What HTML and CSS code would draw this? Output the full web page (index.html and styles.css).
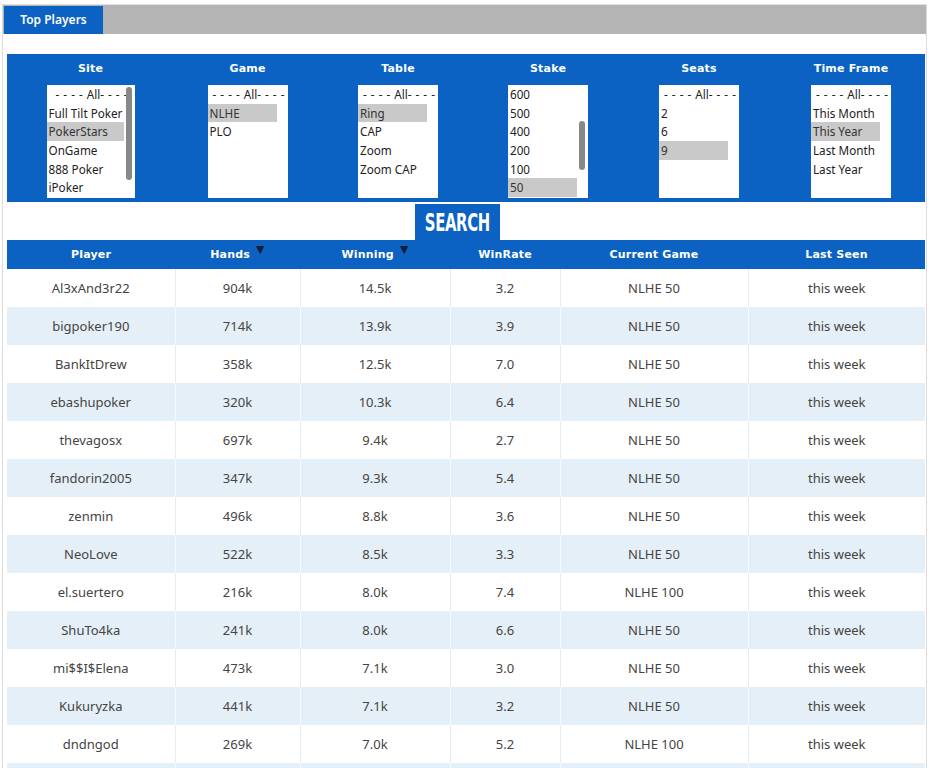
FILE: index.html
```html
<!DOCTYPE html>
<html>
<head>
<meta charset="utf-8">
<link rel="stylesheet" href="styles.css">
</head>
<body>
<div class="page">
  <div class="tabbar"><div class="tab">Top Players</div></div>
  <div class="content">
    <div class="filters">
      <div class="filter">
        <div class="flabel">Site</div>
        <div class="list list-wide">
          <div class="opt all">- - - - All- - - -</div>
          <div class="opt">Full Tilt Poker</div>
          <div class="opt sel">PokerStars</div>
          <div class="opt">OnGame</div>
          <div class="opt">888 Poker</div>
          <div class="opt">iPoker</div>
          <div class="thumb thumb-site"></div>
        </div>
      </div>
      <div class="filter">
        <div class="flabel">Game</div>
        <div class="list">
          <div class="opt all">- - - - All- - - -</div>
          <div class="opt sel">NLHE</div>
          <div class="opt">PLO</div>
        </div>
      </div>
      <div class="filter">
        <div class="flabel">Table</div>
        <div class="list">
          <div class="opt all">- - - - All- - - -</div>
          <div class="opt sel">Ring</div>
          <div class="opt">CAP</div>
          <div class="opt">Zoom</div>
          <div class="opt">Zoom CAP</div>
        </div>
      </div>
      <div class="filter">
        <div class="flabel">Stake</div>
        <div class="list">
          <div class="opt">600</div>
          <div class="opt">500</div>
          <div class="opt">400</div>
          <div class="opt">200</div>
          <div class="opt">100</div>
          <div class="opt sel">50</div>
          <div class="thumb thumb-stake"></div>
        </div>
      </div>
      <div class="filter">
        <div class="flabel">Seats</div>
        <div class="list">
          <div class="opt all">- - - - All- - - -</div>
          <div class="opt">2</div>
          <div class="opt">6</div>
          <div class="opt sel">9</div>
        </div>
      </div>
      <div class="filter">
        <div class="flabel">Time Frame</div>
        <div class="list">
          <div class="opt all">- - - - All- - - -</div>
          <div class="opt">This Month</div>
          <div class="opt sel">This Year</div>
          <div class="opt">Last Month</div>
          <div class="opt">Last Year</div>
        </div>
      </div>
    </div>
    <div class="search-row"><div class="search"><span>SEARCH</span></div></div>
    <table class="players">
      <colgroup>
        <col style="width:168px"><col style="width:125px"><col style="width:150px"><col style="width:110px"><col style="width:188px"><col style="width:177px">
      </colgroup>
      <thead>
        <tr>
          <th>Player</th>
          <th>Hands<span class="arrow">&#9660;</span></th>
          <th>Winning<span class="arrow">&#9660;</span></th>
          <th>WinRate</th>
          <th>Current Game</th>
          <th>Last Seen</th>
        </tr>
      </thead>
      <tbody>
        <tr><td>Al3xAnd3r22</td><td>904k</td><td>14.5k</td><td>3.2</td><td>NLHE 50</td><td>this week</td></tr>
        <tr><td>bigpoker190</td><td>714k</td><td>13.9k</td><td>3.9</td><td>NLHE 50</td><td>this week</td></tr>
        <tr><td>BankItDrew</td><td>358k</td><td>12.5k</td><td>7.0</td><td>NLHE 50</td><td>this week</td></tr>
        <tr><td>ebashupoker</td><td>320k</td><td>10.3k</td><td>6.4</td><td>NLHE 50</td><td>this week</td></tr>
        <tr><td>thevagosx</td><td>697k</td><td>9.4k</td><td>2.7</td><td>NLHE 50</td><td>this week</td></tr>
        <tr><td>fandorin2005</td><td>347k</td><td>9.3k</td><td>5.4</td><td>NLHE 50</td><td>this week</td></tr>
        <tr><td>zenmin</td><td>496k</td><td>8.8k</td><td>3.6</td><td>NLHE 50</td><td>this week</td></tr>
        <tr><td>NeoLove</td><td>522k</td><td>8.5k</td><td>3.3</td><td>NLHE 50</td><td>this week</td></tr>
        <tr><td>el.suertero</td><td>216k</td><td>8.0k</td><td>7.4</td><td>NLHE 100</td><td>this week</td></tr>
        <tr><td>ShuTo4ka</td><td>241k</td><td>8.0k</td><td>6.6</td><td>NLHE 50</td><td>this week</td></tr>
        <tr><td>mi$$I$Elena</td><td>473k</td><td>7.1k</td><td>3.0</td><td>NLHE 50</td><td>this week</td></tr>
        <tr><td>Kukuryzka</td><td>441k</td><td>7.1k</td><td>3.2</td><td>NLHE 50</td><td>this week</td></tr>
        <tr><td>dndngod</td><td>269k</td><td>7.0k</td><td>5.2</td><td>NLHE 100</td><td>this week</td></tr>
        <tr><td>&nbsp;</td><td></td><td></td><td></td><td></td><td></td></tr>
      </tbody>
    </table>
  </div>
</div>
</body>
</html>
```

FILE: styles.css
```css
html, body {
  margin: 0;
  padding: 0;
  background: #fff;
}
body {
  font-family: "Noto Sans", "Open Sans", sans-serif;
  overflow: hidden;
}
.page {
  margin: 4px 0 0 2px;
  width: 923px;
  border-left: 1px solid #dcdcdc;
  border-right: 1px solid #dcdcdc;
  height: 800px;
}
.tabbar {
  height: 30px;
  background: #b4b4b4;
  display: flex;
  padding-top: 1px;
  box-sizing: border-box;
  border-top: 1px solid #e2e2e2;
}
.tab {
  margin-left: 1px;
  width: 99px;
  background: #0b62c3;
  color: #fff;
  font-size: 12px;
  font-weight: 600;
  display: flex;
  align-items: center;
  justify-content: center;
  padding-bottom: 1px;
}
.content {
  padding: 20px 1px 0 4px;
}
.filters {
  background: #0b62c3;
  height: 148px;
  display: grid;
  grid-template-columns: 163px 151px 150px 150px 152px 152px;
  padding: 7px 0 0 2px;
  box-sizing: border-box;
}
.filter {
  display: flex;
  flex-direction: column;
  align-items: center;
}
.flabel {
  font-family: "DejaVu Sans", sans-serif;
  font-weight: bold;
  font-size: 11px;
  color: #fff;
  height: 16px;
  line-height: 16px;
  margin-bottom: 8px;
  letter-spacing: 0.2px;
}
.list {
  position: relative;
  width: 80px;
  height: 113px;
  background: #fff;
  font-size: 11.7px;
  color: #222;
  box-sizing: border-box;
  overflow: hidden;
}
.list-wide {
  width: 88px;
}
.opt {
  height: 18.7px;
  line-height: 18.7px;
  padding-left: 2px;
  margin-right: 11px;
  white-space: nowrap;
}
.opt.all {
  text-align: center;
  margin-right: 0;
  word-spacing: 1px;
}
.opt.sel {
  background: #c9c9c9;
  color: #333;
}
.thumb {
  position: absolute;
  right: 3px;
  width: 6px;
  border-radius: 3px;
  background: #888;
}
.thumb-site {
  top: 2px;
  height: 93px;
}
.thumb-stake {
  top: 36px;
  height: 49px;
}
.search-row {
  display: flex;
  padding: 2px 0 0 408px;
}
.search {
  width: 85px;
  height: 36px;
  background: #0b62c3;
  color: #fff;
  display: flex;
  align-items: center;
  justify-content: center;
  overflow: hidden;
}
.search span {
  display: inline-block;
  font-family: "DejaVu Sans Condensed", "DejaVu Sans", sans-serif;
  font-stretch: condensed;
  font-weight: bold;
  font-size: 25px;
  transform: scaleX(0.66);
  letter-spacing: -0.5px;
  margin-top: 1px;
}
.players {
  width: 918px;
  border-collapse: collapse;
  table-layout: fixed;
}
.players th {
  background: #0b62c3;
  color: #fff;
  font-family: "DejaVu Sans", sans-serif;
  font-weight: bold;
  font-size: 11px;
  height: 29px;
  padding: 0;
  text-align: center;
  letter-spacing: 0.2px;
  vertical-align: middle;
}
.arrow {
  color: #0d1d3c;
  font-size: 11px;
  position: relative;
  top: -5px;
  margin-left: 6px;
  font-family: "DejaVu Sans", sans-serif;
}
.players td {
  height: 38px;
  padding: 0;
  text-align: center;
  font-size: 13px;
  color: #444;
  border-right: 1px solid #e7ecf0;
  vertical-align: middle;
}
.players td:last-child {
  border-right: none;
}
.players tbody tr:nth-child(even) td {
  background: #e4eff7;
  border-right-color: #f7fafc;
}
```
